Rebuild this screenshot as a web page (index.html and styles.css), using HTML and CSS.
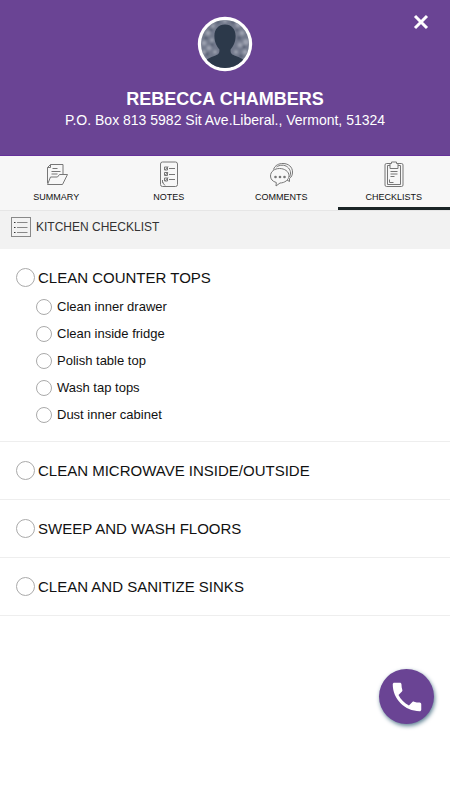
FILE: index.html
```html
<!DOCTYPE html>
<html lang="en">
<head>
<meta charset="utf-8">
<meta name="viewport" content="width=device-width, initial-scale=1">
<title>Rebecca Chambers</title>
<link rel="stylesheet" href="styles.css">
</head>
<body>
<header class="profile">
  <button class="close" type="button" aria-label="Close">
    <svg width="16" height="16" viewBox="0 0 16 16"><path d="M2 2l12 12M14 2L2 14"/></svg>
  </button>
  <svg class="avatar" width="56" height="56" viewBox="0 0 56 56" aria-hidden="true">
    <defs>
      <clipPath id="face"><circle cx="28" cy="28" r="24"/></clipPath>
      <filter id="soft"><feGaussianBlur stdDeviation=".8"/></filter>
    </defs>
    <circle cx="28" cy="28" r="27.2" fill="#fff"/>
    <g clip-path="url(#face)">
      <rect width="56" height="56" fill="#737a8c"/>
      <g filter="url(#soft)">
        <g fill="#9da2b0">
          <circle cx="11" cy="17" r="2.5"/><circle cx="16" cy="10" r="2"/><circle cx="7" cy="27" r="2.5"/>
          <circle cx="12" cy="32" r="2.5"/><circle cx="7" cy="36" r="2"/><circle cx="41" cy="9" r="2.5"/>
          <circle cx="45" cy="17" r="2.5"/><circle cx="49" cy="26" r="3"/><circle cx="43" cy="29" r="2.5"/>
          <circle cx="48" cy="36" r="2.5"/><circle cx="28" cy="5" r="2"/><circle cx="15" cy="24" r="2"/>
          <circle cx="18" cy="36" r="2"/><circle cx="39" cy="36" r="2"/>
        </g>
        <g fill="#4f596c">
          <circle cx="9" cy="22" r="1.6"/><circle cx="14" cy="14" r="1.4"/><circle cx="21" cy="6" r="1.6"/>
          <circle cx="36" cy="6" r="1.6"/><circle cx="42" cy="22" r="1.8"/><circle cx="47" cy="31" r="1.4"/>
          <circle cx="10" cy="38" r="1.6"/><circle cx="15" cy="29" r="1.4"/><circle cx="40" cy="14" r="1.3"/>
          <circle cx="44" cy="40" r="1.6"/>
        </g>
      </g>
      <path fill="#2c394a" d="M28 8.500c-6.500 0-10.600 4.500-10.600 11.500 0 6.500 2.500 10.500 5 13.500.3 4-1 5-4.400 6.200-5 1.700-8.500 3.300-11 6.300v10h42V46c-2.500-3-6-4.600-11-6.300-3.400-1.200-4.700-2.200-4.400-6.200 2.500-3 5-7 5-13.500 0-7-4.100-11.500-10.600-11.500z"/>
    </g>
  </svg>
  <h1 class="name">REBECCA CHAMBERS</h1>
  <p class="address">P.O. Box 813 5982 Sit Ave.Liberal., Vermont, 51324</p>
</header>

<nav class="tabs">
  <a class="tab" href="#summary">
    <svg class="tab-icon" width="28" height="28" viewBox="0 0 28 28">
      <path d="M5.500 23V7.500l3-3h12.500v9.500M5.500 7.500h3v-3M10.500 8.500h5M9.500 11.500h9M9.500 14h6"/>
      <path d="M5.500 24.500l3-7.500h7l2-2.500h8l-5 10z"/>
    </svg>
    SUMMARY
  </a>
  <a class="tab" href="#notes">
    <svg class="tab-icon" width="28" height="28" viewBox="0 0 28 28">
      <rect x="5.500" y="2" width="17" height="24.500" rx="2"/>
      <path d="M7.500 20v2.500l2.500 3M7.500 22.500h1"/>
      <path d="M9.500 7h3v3h-3zM9.500 12.500h3v3h-3zM9.500 18h3v3h-3zM14 8.500h6M14 14.500h6M14 19.500h6M9 8.500l1.500 1 2.500-3M9 14l1.500 1 2.500-3M9 19.500l1.500 1 2.500-3"/>
    </svg>
    NOTES
  </a>
  <a class="tab" href="#comments">
    <svg class="tab-icon" width="28" height="28" viewBox="0 0 28 28">
      <path d="M6.500 9.500C8 5 12 3.500 16 3.500c5.500 0 9.500 3.500 9.500 8.500 0 3-1 5-3 6.500v3l-2.500-1.500"/>
      <path d="M9.500 7c3-2.300 8-2.500 11 0s4 6.500 2 10"/>
      <path d="M12.500 8.500c5 0 9.500 3 9.500 7.200s-4.500 7.300-9 7.300l-4 3 .3-3.500C5.500 21.500 3.500 19 3.500 16c0-4.500 4-7.500 9-7.500z"/>
      <g class="dots"><circle cx="8.500" cy="17" r="1.300"/><circle cx="13" cy="17" r="1.300"/><circle cx="17.500" cy="17" r="1.300"/></g>
    </svg>
    COMMENTS
  </a>
  <a class="tab tab-active" href="#checklists" aria-current="page">
    <svg class="tab-icon" width="28" height="28" viewBox="0 0 28 28">
      <path d="M10 3.500H6.500q-1.500 0-1.500 1.500v20q0 1.500 1.500 1.500h15q1.500 0 1.500-1.500V5q0-1.500-1.500-1.500H18"/>
      <path d="M10 5.500H7.500v19h13v-19H18M9.500 19.500v3h4"/>
      <path d="M10 8.500V3.500h1.500v-1.500h5v1.500h1.500v5z"/>
      <path d="M10.500 11.500h7M10.500 14h7M10.500 16.500h4"/>
    </svg>
    CHECKLISTS
  </a>
</nav>

<main>
  <h2 class="section">
    <svg class="section-icon" width="20" height="20" viewBox="0 0 20 20">
      <rect x=".5" y=".5" width="19" height="19"/>
      <path d="M6 5.500h10.500M6 10.500h10.500M6 15.500h10.500"/>
      <path class="marks" d="M3 5.500h1.500M3 10.500h1.500M3 15.500h1.500"/>
    </svg>
    KITCHEN CHECKLIST
  </h2>

  <ul class="list">
    <li class="group group-open">
      <label class="task"><input class="check" type="checkbox">CLEAN COUNTER TOPS</label>
      <ul class="steps">
        <li><label class="step"><input class="check check-small" type="checkbox">Clean inner drawer</label></li>
        <li><label class="step"><input class="check check-small" type="checkbox">Clean inside fridge</label></li>
        <li><label class="step"><input class="check check-small" type="checkbox">Polish table top</label></li>
        <li><label class="step"><input class="check check-small" type="checkbox">Wash tap tops</label></li>
        <li><label class="step"><input class="check check-small" type="checkbox">Dust inner cabinet</label></li>
      </ul>
    </li>
    <li class="group"><label class="task"><input class="check" type="checkbox">CLEAN MICROWAVE INSIDE/OUTSIDE</label></li>
    <li class="group"><label class="task"><input class="check" type="checkbox">SWEEP AND WASH FLOORS</label></li>
    <li class="group"><label class="task"><input class="check" type="checkbox">CLEAN AND SANITIZE SINKS</label></li>
  </ul>
</main>

<button class="call" type="button" aria-label="Call">
  <svg width="38" height="38" viewBox="0 0 24 24"><path d="M6.620 10.790c1.440 2.830 3.760 5.140 6.590 6.590l2.200-2.200c.27-.27.67-.36 1.020-.24 1.120.37 2.330.57 3.570.57.55 0 1 .45 1 1V20c0 .55-.45 1-1 1-9.390 0-17-7.610-17-17 0-.55.45-1 1-1h3.500c.55 0 1 .45 1 1 0 1.250.2 2.450.57 3.570.11.35.03.74-.25 1.020z"/></svg>
</button>
</body>
</html>
```
FILE: styles.css
```css
* {
  box-sizing: border-box;
}

body {
  margin: 0;
  min-height: 100vh;
  background: #fff;
  color: #111;
  font-family: "Liberation Sans", Arial, sans-serif;
}

h1,
h2,
p,
ul {
  margin: 0;
  padding: 0;
}

ul {
  list-style: none;
}

.profile {
  position: relative;
  display: flex;
  flex-direction: column;
  align-items: center;
  padding: 16px 16px 25px;
  background: #6a4494;
  border-bottom: 1px solid #65309a;
  color: #fff;
  text-align: center;
}

.close {
  position: absolute;
  top: 14px;
  right: 21px;
  width: 16px;
  height: 16px;
  padding: 0;
  border: 0;
  background: none;
}

.close svg {
  display: block;
  fill: none;
  stroke: #fff;
  stroke-width: 3;
}

.name {
  margin-top: 16px;
  font-size: 18px;
  line-height: 22px;
}

.address {
  font-size: 14px;
  line-height: 20px;
}

.tabs {
  display: grid;
  grid-template-columns: repeat(4, 1fr);
  background: #f7f7f7;
  border-bottom: 1px solid #e6e6e6;
}

.tab {
  display: flex;
  flex-direction: column;
  align-items: center;
  gap: 4px;
  padding: 4px 0 5px;
  border-bottom: 3px solid transparent;
  color: #111;
  font-size: 9px;
  line-height: 10px;
  text-decoration: none;
}

.tab-active {
  border-bottom-color: #1a2426;
}

.tab-icon {
  fill: none;
  stroke: #777;
  stroke-width: 1;
}

.dots {
  fill: #777;
  stroke: none;
}

.section {
  display: flex;
  align-items: center;
  gap: 5px;
  padding: 6px 11px 12px;
  background: #f2f2f2;
  color: #333;
  font-size: 12px;
  font-weight: 400;
  line-height: 20px;
}

.section-icon {
  fill: none;
  stroke: #888;
}

.section-icon .marks {
  stroke: #333;
}

.group {
  padding: 19px 16px;
  border-bottom: 1px solid #eee;
}

.group-open {
  padding-bottom: 13px;
}

.task,
.step {
  display: flex;
  align-items: center;
}

.task {
  gap: 3px;
  font-size: 15px;
  line-height: 19px;
}

.steps {
  padding: 6px 0 0 20px;
}

.step {
  gap: 5px;
  font-size: 13px;
  line-height: 27px;
}

.check {
  appearance: none;
  flex: none;
  width: 19px;
  height: 19px;
  margin: 0;
  border: 1px solid #aaa;
  border-radius: 50%;
  background: #fff;
}

.check:checked {
  background: #6a4494;
}

.check-small {
  width: 16px;
  height: 16px;
}

.call {
  position: fixed;
  right: 16px;
  bottom: 76px;
  display: grid;
  place-items: center;
  width: 55px;
  height: 55px;
  padding: 0;
  border: 0;
  border-radius: 50%;
  background: #6a4494;
  box-shadow: 1px 2px 4px #5d7f92;
}

.call svg {
  fill: #fff;
}
```
